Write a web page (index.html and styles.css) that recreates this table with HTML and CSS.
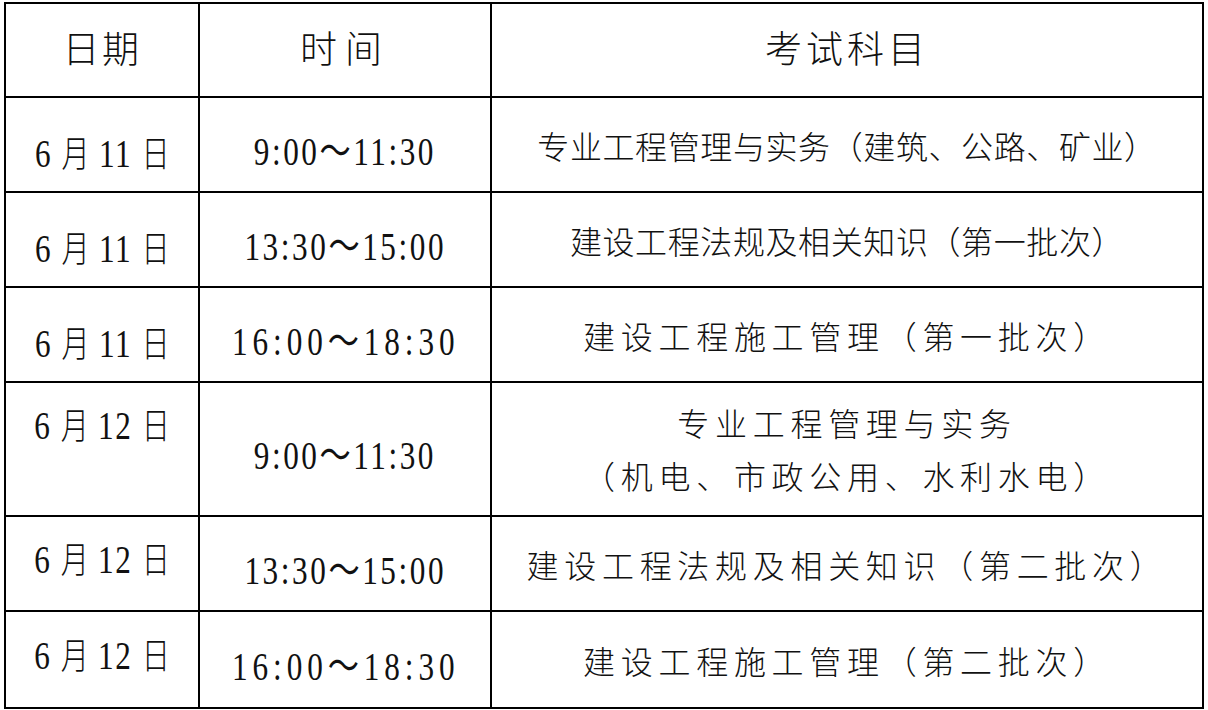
FILE: index.html
```html
<!DOCTYPE html>
<html lang="zh-CN">
<head>
<meta charset="utf-8">
<title>考试时间安排</title>
<link rel="stylesheet" href="styles.css">
</head>
<body>
<table class="schedule">
  <colgroup>
    <col class="c-date">
    <col class="c-time">
    <col class="c-subj">
  </colgroup>
  <thead>
    <tr class="head">
      <th class="h-date">日期</th>
      <th class="h-time">时间</th>
      <th class="h-subj">考试科目</th>
    </tr>
  </thead>
  <tbody>
    <tr class="row r-a">
      <td class="date"><span class="dt">6 <span class="cj">月</span> 11 <span class="cj">日</span></span></td>
      <td class="time"><span class="tm">9:00～11:30</span></td>
      <td class="subj"><span class="sj tight">专业工程管理与实务（建筑、公路、矿业）</span></td>
    </tr>
    <tr class="row r-a">
      <td class="date"><span class="dt">6 <span class="cj">月</span> 11 <span class="cj">日</span></span></td>
      <td class="time"><span class="tm">13:30～15:00</span></td>
      <td class="subj"><span class="sj tight">建设工程法规及相关知识（第一批次）</span></td>
    </tr>
    <tr class="row r-a">
      <td class="date"><span class="dt">6 <span class="cj">月</span> 11 <span class="cj">日</span></span></td>
      <td class="time"><span class="tm wide">16:00～18:30</span></td>
      <td class="subj"><span class="sj loose">建设工程施工管理（第一批次）</span></td>
    </tr>
    <tr class="row tall">
      <td class="date top"><span class="dt">6 <span class="cj">月</span> 12 <span class="cj">日</span></span></td>
      <td class="time"><span class="tm">9:00～11:30</span></td>
      <td class="subj"><span class="sj loose two"><span class="ln">专业工程管理与实务</span><span class="ln">（机电、市政公用、水利水电）</span></span></td>
    </tr>
    <tr class="row r-b">
      <td class="date"><span class="dt">6 <span class="cj">月</span> 12 <span class="cj">日</span></span></td>
      <td class="time"><span class="tm">13:30～15:00</span></td>
      <td class="subj"><span class="sj loose">建设工程法规及相关知识（第二批次）</span></td>
    </tr>
    <tr class="row r-b last">
      <td class="date"><span class="dt">6 <span class="cj">月</span> 12 <span class="cj">日</span></span></td>
      <td class="time"><span class="tm wide">16:00～18:30</span></td>
      <td class="subj"><span class="sj loose">建设工程施工管理（第二批次）</span></td>
    </tr>
  </tbody>
</table>
</body>
</html>
```

FILE: styles.css
```css
html, body {
  margin: 0;
  padding: 0;
  background: #fff;
}

body {
  width: 1208px;
  height: 710px;
  overflow: hidden;
  color: #111;
  font-family: "Noto Sans CJK SC", sans-serif;
}

.schedule {
  margin: 2px 0 0 4px;
  width: 1200px;
  border-collapse: collapse;
  table-layout: fixed;
  border: 2px solid #000;
}

.c-date { width: 194px; }
.c-time { width: 292px; }

.schedule th,
.schedule td {
  border: 2px solid #000;
  padding: 0;
  text-align: center;
  vertical-align: middle;
  line-height: 1;
  white-space: nowrap;
}

/* header */
.head { height: 94px; }
.schedule th {
  font-family: "Noto Sans CJK SC", sans-serif;
  font-weight: 300;
  font-size: 37px;
  padding-bottom: 6px;
}
.h-date { letter-spacing: 2.5px; }
.h-time { letter-spacing: 8px; }
.h-subj { letter-spacing: 4px; }

/* rows */
.row { height: 95px; }
.row.tall { height: 134px; }
.row.last { height: 97px; }

/* date column */
.dt {
  display: inline-block;
  font-family: "Liberation Serif", "Noto Sans CJK SC", serif;
  font-size: 40px;
  letter-spacing: 2px;
  transform: scaleX(0.78);
}
.dt .cj {
  font-family: "Noto Sans CJK SC", sans-serif;
  font-weight: 300;
  font-size: 36px;
  letter-spacing: 0;
}
.schedule .r-a .date { padding-top: 18px; }
.schedule .r-b .date { padding-bottom: 9px; }
.schedule .date.top {
  vertical-align: top;
  padding-top: 22px;
}

/* time column */
.tm {
  display: inline-block;
  font-family: "Liberation Serif", "Noto Sans CJK SC", serif;
  font-size: 40px;
  letter-spacing: 3.3px;
  transform: scaleX(0.78);
}
.tm.wide { letter-spacing: 6.3px; }
.schedule .time { padding-top: 14px; }

/* subject column */
.sj {
  display: inline-block;
  font-family: "Noto Sans CJK SC", sans-serif;
  font-weight: 300;
  font-size: 32px;
}
.sj.tight { letter-spacing: 0.6px; }
.sj.loose { letter-spacing: 5.7px; }
.sj.two .ln {
  display: block;
  line-height: 53px;
}
```
